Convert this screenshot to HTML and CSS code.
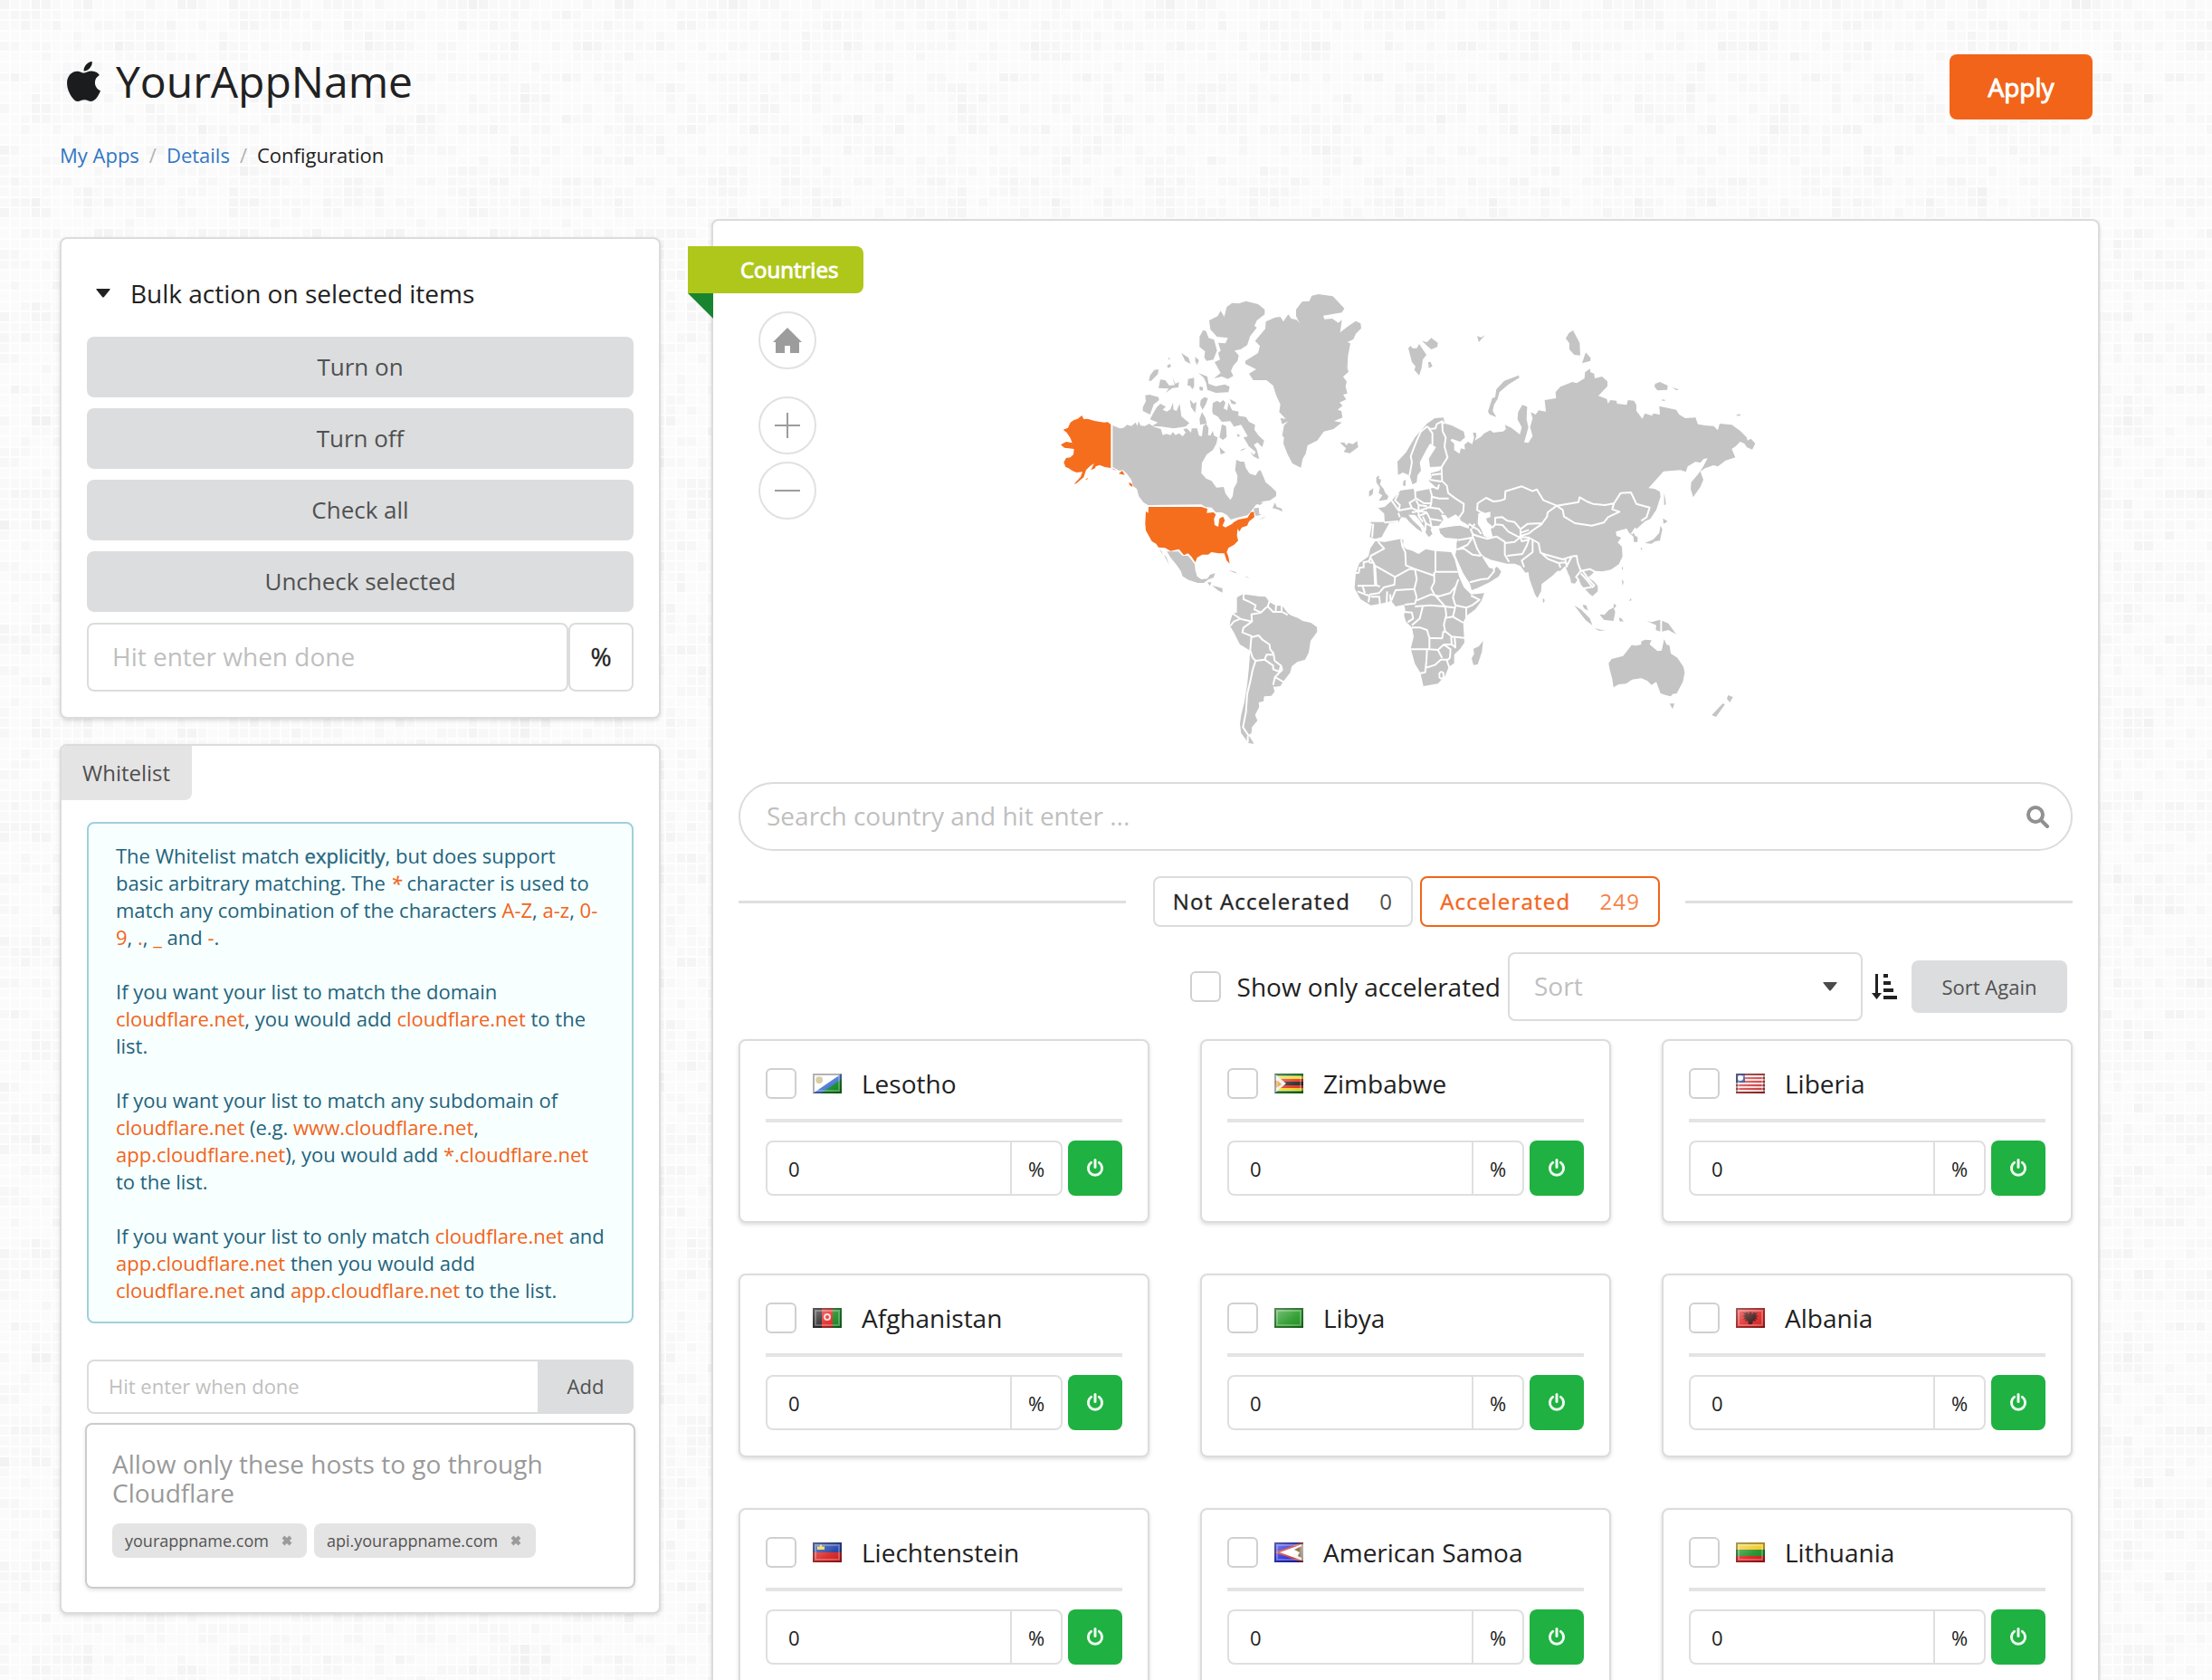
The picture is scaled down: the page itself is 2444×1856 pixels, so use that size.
FILE: index.html
```html
<!DOCTYPE html>
<html lang="en">
<head>
<meta charset="utf-8">
<meta name="viewport" content="width=device-width, initial-scale=1">
<title>YourAppName - Configuration</title>
<link rel="stylesheet" href="styles.css">
</head>
<body>
<svg class="sprite" aria-hidden="true">
  <defs>
    <linearGradient id="gloss" x1="0" y1="0" x2="1" y2="1">
      <stop offset="0" stop-color="#fff" stop-opacity=".45"/>
      <stop offset=".6" stop-color="#fff" stop-opacity=".1"/>
      <stop offset="1" stop-color="#000" stop-opacity=".15"/>
    </linearGradient>
  </defs>
  <symbol id="i-power" viewBox="0 0 20 20">
    <path d="M5.6 4.4a7.6 7.6 0 1 0 8.8 0" fill="none" stroke="currentColor" stroke-width="3" stroke-linecap="round"/>
    <path d="M10 1.5v8" fill="none" stroke="currentColor" stroke-width="3" stroke-linecap="round"/>
  </symbol>
  <symbol id="i-close" viewBox="0 0 12 12">
    <path d="M2 2l8 8M10 2l-8 8" fill="none" stroke="currentColor" stroke-width="4"/>
  </symbol>
  <symbol id="f-frame" viewBox="0 0 32 22">
    <rect width="32" height="22" fill="url(#gloss)"/>
    <rect x="1" y="1" width="30" height="20" fill="none" stroke="#000" stroke-opacity=".3" stroke-width="2"/>
    <rect x="3" y="3" width="26" height="16" fill="none" stroke="#fff" stroke-opacity=".25" stroke-width="2"/>
  </symbol>
</svg>

<div class="page">
  <header class="top">
    <div class="top-main">
      <h1 class="app-title">
        <svg class="apple" viewBox="4 32 376 448" aria-hidden="true"><path d="M318.700 268.700c-.2-36.700 16.400-64.400 50-84.800-18.800-26.900-47.200-41.700-84.700-44.600-35.500-2.800-74.300 20.700-88.500 20.700-15 0-49.400-19.700-76.400-19.700C63.300 141.200 4 184.800 4 273.500q0 39.300 14.400 81.200c12.800 36.700 59 126.700 107.200 125.200 25.200-.6 43-17.900 75.800-17.900 31.800 0 48.300 17.900 76.400 17.900 48.600-.7 90.400-82.500 102.600-119.300-65.200-30.700-61.700-90-61.700-91.900zm-56.600-164.200c27.300-32.400 24.800-61.900 24-72.500-24.100 1.400-52 16.400-67.900 34.900-17.500 19.800-27.800 44.300-25.600 71.900 26.100 2 49.900-11.400 69.500-34.300z"/></svg>
        YourAppName
      </h1>
      <nav class="crumbs" aria-label="Breadcrumb">
        <a href="#apps">My Apps</a><span class="sep">/</span><a href="#details">Details</a><span class="sep">/</span><span>Configuration</span>
      </nav>
    </div>
    <button class="apply strong" type="button">Apply</button>
  </header>

  <div class="columns">
    <aside class="side">
      <section class="panel bulk">
        <h2 class="bulk-title"><svg class="caret" viewBox="0 0 16 10" aria-hidden="true"><path d="M1 0h14q1 0 .5 1L9 9q-1 1-2 0L.5 1Q0 0 1 0z"/></svg>Bulk action on selected items</h2>
        <div class="bulk-actions">
          <button class="btn" type="button">Turn on</button>
          <button class="btn" type="button">Turn off</button>
          <button class="btn" type="button">Check all</button>
          <button class="btn" type="button">Uncheck selected</button>
          <div class="bulk-percent">
            <input id="bulk" class="field" type="text" placeholder="Hit enter when done">
            <label class="unit medium" for="bulk">%</label>
          </div>
        </div>
      </section>

      <section class="panel whitelist">
        <h2 class="tab">Whitelist</h2>
        <div class="info">
          <p>The Whitelist match <span class="medium">explicitly</span>, but does support basic arbitrary matching. The <em class="medium">*</em> character is used to match any combination of the characters <b>A-Z</b>, <b>a-z</b>, <b>0-9</b>, <b>.</b>, <b>_</b> and <b>-</b>.</p>
          <p>If you want your list to match the domain <b>cloudflare.net</b>, you would add <b>cloudflare.net</b> to the list.</p>
          <p>If you want your list to match any subdomain of <b>cloudflare.net</b> (e.g. <b>www.cloudflare.net</b>, <b>app.cloudflare.net</b>), you would add <b>*.cloudflare.net</b> to the list.</p>
          <p>If you want your list to only match <b>cloudflare.net</b> and <b>app.cloudflare.net</b> then you would add <b>cloudflare.net</b> and <b>app.cloudflare.net</b> to the list.</p>
        </div>
        <div class="add-row">
          <input class="field" type="text" placeholder="Hit enter when done" aria-label="Host">
          <button class="btn" type="button">Add</button>
        </div>
        <div class="hosts">
          <p>Allow only these hosts to go through Cloudflare</p>
          <div class="tags">
            <span class="tag">yourappname.com<button type="button" aria-label="Remove yourappname.com"><svg><use href="#i-close"/></svg></button></span>
            <span class="tag">api.yourappname.com<button type="button" aria-label="Remove api.yourappname.com"><svg><use href="#i-close"/></svg></button></span>
          </div>
        </div>
      </section>
    </aside>

    <main class="panel countries">
      <h2 class="ribbon strong">Countries</h2>

      <div class="map-area">
        <div class="map-controls">
          <button class="round home" type="button" aria-label="Reset map"><svg viewBox="0 0 32 28"><path d="M16 0l16 16h-3v12H19v-8h-6v8H3V16H0z" fill="currentColor"/></svg></button>
          <button class="round" type="button" aria-label="Zoom in"><svg viewBox="0 0 28 28"><path d="M14 0v28M0 14h28" stroke="currentColor" stroke-width="2"/></svg></button>
          <button class="round" type="button" aria-label="Zoom out"><svg viewBox="0 0 28 28"><path d="M0 14h28" stroke="currentColor" stroke-width="2"/></svg></button>
        </div>
        <svg class="map" viewBox="0 42 2430 1518" role="img" aria-label="World map">
          <g class="land">
            <!-- Canada -->
            <path d="M238 480L262 490 274 488 286 478 300 482 314 470 320 482 324 466 330 480 344 482 360 474 372 484 398 492 404 512 416 508 430 512 438 502 446 512 458 506 470 516 480 504 472 492 484 490 498 504 500 490 518 490 524 514 534 516 538 482 548 474 556 490 554 512 562 514 570 498 574 514 586 520 582 540 570 562 550 576 534 604 532 638 548 656 566 664 582 686 606 684 612 706 628 727 636 715 640 688 650 670 652 648 644 628 648 594 662 600 674 600 680 622 692 640 712 646 720 632 728 628 738 650 745 668 765 685 780 700 780 714 760 728 735 732 712 744 694 768 684 778 650 786 630 792 616 776 600 768 580 768 566 752 545 750 532 742 355 744 340 735 325 715 318 690 305 680 300 660 285 640 272 628 260 630 238 618Z"/>
            <path d="M705 755L722 752 724 774 732 776 712 780ZM776 736L782 750 798 755 801 766 785 758 768 754ZM722 793L748 780 736 788ZM712 738L738 734 726 744Z"/>
            <path d="M346 380L360 378 390 386 392 396 374 410 362 444 338 432 338 420 348 400ZM370 444L384 420 396 408 414 418 404 428 418 434 430 426 438 404 440 428 450 432 460 408 466 450 480 462 492 472 480 484 440 490 400 484 368 482 388 470 362 460ZM494 394L506 408 516 402 512 438 498 420ZM530 396L542 386 554 390 546 412 536 428 528 412ZM534 436L546 456 550 474 528 478 526 458Z"/>
            <path d="M568 430L570 406 584 398 594 404 604 396 612 404 606 424 618 430 622 404 634 430 656 434 654 448 680 452 690 468 710 478 708 494 722 514 740 530 734 552 718 536 706 544 716 560 724 592 706 580 712 568 690 550 672 520 686 516 664 478 640 484 628 466 600 468 586 450 570 442ZM626 392L648 404 644 410 632 408ZM600 476L614 482 616 518 604 528 592 520ZM592 552L612 570 596 576ZM668 558L682 556 660 566ZM650 508L662 514 652 518ZM694 566L722 592 704 582Z"/>
            <path d="M616 88L634 74 656 76 680 68 720 78 742 96 742 112 716 132 708 150 716 156 694 184 684 214 662 228 642 232 656 248 652 266 638 282 630 300 638 316 620 326 600 318 574 324 596 306 576 270 594 262 588 240 596 232 588 206 612 208 620 190 584 186 562 162 558 132 586 118 596 100 608 120Z"/>
            <path d="M538 164L548 168 556 190 574 196 584 232 572 262 550 266 542 256 544 234 526 220 526 186ZM522 306L552 318 556 342 580 350 610 344 626 352 622 370 580 372 552 362 548 340 540 322ZM466 240L490 256 496 276 478 266ZM512 252L524 264 518 280 512 268ZM358 332L362 314 376 296 390 294 388 310 366 332ZM418 282L428 276 432 284 422 290ZM422 256l8 2-6 4ZM396 328L412 330 426 348 444 346 436 320 446 342 458 336 456 354 436 356 414 372 424 358 390 356ZM488 326L508 322 508 352 502 360 494 348 486 348ZM526 350l12 4-2 12-10-4ZM524 288l12 0Z"/>
            <!-- Greenland, Iceland -->
            <path d="M898 50L920 45 968 52 1006 92 998 106 936 116 940 128 966 126 986 140 998 130 992 172 1020 150 1044 134 1060 142 1062 158 1044 176 1036 194 1016 204 1026 208 1018 250 1016 290 1020 302 1002 318 1014 335 1010 350 1016 374 1002 378 1012 394 990 404 1000 414 984 428 996 432 1000 454 972 466 998 470 970 492 938 500 916 530 884 546 878 574 868 590 862 620 834 606 818 576 804 540 806 520 800 514 806 480 820 466 800 476 794 456 812 458 790 436 794 410 780 380 770 348 748 330 704 330 690 308 714 294 678 276 678 266 720 240 726 216 710 200 744 160 746 136 776 122 794 120 804 136 820 112 830 126 848 130 858 142 846 118 846 96 866 70 890 68Z"/>
            <path d="M992 538L1006 536 1012 546 1020 538 1034 542 1048 532 1052 552 1024 572 1004 568 1012 556Z"/>
            <!-- Mexico and the Caribbean -->
            <path d="M418 898L455 898 470 912 488 912 500 926 510 940 512 960 518 980 532 990 552 988 562 974 578 970 572 985 556 990 540 1002 520 1002 490 992 470 980 464 962 448 940 430 918ZM394 892L404 910 400 896ZM408 908L416 924 426 944 416 916ZM552 1000l14 0-6 12ZM568 1010L590 1016 602 1020 602 1034 586 1026ZM600 1042l6 4ZM622 960l30 12-10-8ZM676 982l16 4-8-4Z"/>
            <!-- South America -->
            <path d="M650 1050L668 1040 690 1042 720 1046 745 1048 758 1066 780 1078 800 1078 818 1102 830 1110 852 1118 868 1128 895 1134 915 1148 916 1164 894 1194 888 1232 876 1256 850 1264 832 1278 826 1300 804 1328 794 1344 776 1346 770 1344 775 1362 764 1376 740 1378 738 1394 722 1398 724 1412 710 1440 718 1458 700 1480 698 1500 688 1506 700 1524 706 1536 688 1532 664 1500 660 1470 664 1440 674 1400 684 1340 690 1280 694 1226 660 1206 640 1166 626 1142 628 1128 636 1104 650 1100Z"/>
          </g>
          <path class="border" d="M672 1040L672 1056 690 1064 712 1076 708 1090 730 1100 744 1086 752 1080 770 1098 800 1098 818 1108M730 1100L698 1106 700 1130 664 1122 636 1104M758 1062L752 1080M780 1076L778 1098M798 1076V1098M628 1144L640 1130 662 1120M700 1130L672 1150 668 1166 698 1178 694 1226M698 1182L722 1176 734 1190 758 1206 760 1222 772 1236M694 1226L702 1250 712 1260 742 1256 748 1240 772 1240 775 1260 796 1276 790 1296 770 1288 770 1276 742 1256M712 1260L702 1290 694 1330 684 1370 680 1430 670 1480 690 1510M796 1276L800 1290 776 1314 770 1340M776 1314L804 1330M686 1510V1530"/>
          <g class="active">
            <path d="M136 447L142 459 155 458 178 465 210 470 222 469 232 477 232 621 212 618 195 611 182 616 180 622 166 628 176 606 162 616 150 628 142 652 132 660 118 672 110 674 132 650 138 634 118 636 104 630 92 622 82 618 76 602 84 588 98 586 108 576 110 558 92 556 78 554 66 544 84 534 104 538 98 522 86 504 74 494 90 488 98 470 110 462 122 458ZM148 658l10-4-6 6ZM258 640L270 630 278 644ZM292 668L302 674 304 684 294 678ZM236 622L252 630 240 626ZM100 678l6-2ZM288 696l2 6Z"/>
            <path d="M357 750H532L552 756 550 770 572 768 580 775 574 790 576 810 588 816 592 788 604 782 610 795 602 812 612 818 634 806 640 800 655 792 685 786 696 768 706 766 708 784 690 798 684 812 666 818 658 832 652 822 650 845 654 862 640 876 622 886 616 900 622 916 626 938 616 928 608 904 590 904 565 900 555 908 535 908 518 918 512 934 500 916 488 904 474 910 458 890 430 896 412 886 390 884 382 872 368 864 358 846 348 828 346 805 348 765 356 770Z"/>
          </g>
          <g transform="translate(990 0)">
            <g class="land">
              <!-- Arctic islands -->
              <path d="M228 224L236 216 242 224 256 224 264 210 288 246 276 262 272 290 264 314 248 296 252 284 240 270ZM274 200L290 204 304 190 326 206 324 220 304 228 290 216ZM294 270l8 0 6 14-12 6ZM456 184l14 4 14-8-12 12-10 12ZM750 192L760 174 774 165 796 206 798 248 778 246 762 228 762 208ZM816 238L832 256 832 266 804 274ZM594 314L596 322 560 344 530 370 524 392 512 412 508 432 520 452 498 444 492 434 506 390 516 386 520 360 546 332ZM1046 342L1062 336 1088 348 1086 362 1054 364 1044 352ZM1102 354l22 6-6 4ZM1064 396l12-2 4 6ZM1312 448l14-6 4 6Z"/>
              <!-- Eurasia -->
              <path d="M350 474L372 480 412 500 416 520 400 534 372 524 368 530 380 540 380 562 398 574 402 556 416 560 414 544 426 534 440 542 446 520 442 504 452 504 454 516 448 530 468 518 480 506 500 496 510 504 526 502 542 500 552 492 548 478 570 488 598 510 604 486 590 460 592 436 606 412 622 418 620 460 626 486 612 536 626 538 640 516 632 486 640 456 634 436 650 444 660 430 684 434 680 396 718 390 716 370 732 352 772 336 786 340 812 324 814 304 830 292 832 304 844 308 846 324 870 318 888 334 888 350 858 382 886 392 890 408 898 396 918 398 920 408 952 412 956 396 976 398 984 412 984 432 1004 458 1012 440 1036 448 1040 440 1062 444 1060 416 1116 428 1126 444 1146 456 1180 454 1188 476 1212 480 1240 482 1254 496 1260 474 1300 478 1328 498 1350 520 1352 530 1364 524 1378 540 1368 560 1350 552 1342 540 1328 534 1314 548 1300 558 1312 586 1280 596 1254 616 1240 612 1212 622 1196 632 1206 660 1196 684 1172 718 1164 690 1166 668 1190 640 1206 616 1220 588 1206 592 1196 604 1180 600 1154 616 1148 634 1130 628 1074 632 1024 688 1044 690 1062 700 1064 716 1050 760 1030 790 1012 798 986 822 972 830 980 846 988 850 988 866 976 866 974 848 960 836 952 822 936 826 916 832 918 846 934 852 922 868 936 882 938 914 926 940 900 958 872 964 846 962 838 972 824 984 842 996 856 1012 856 1030 838 1046 826 1036 812 1020 802 1010 792 988 780 1004 768 1002 764 984 756 966 748 946 732 962 722 962 706 978 670 1006 668 1030 656 1052 648 1040 630 990 626 966 616 968 600 946 580 938 555 938 530 932 500 925 480 915 466 902 482 930 496 952 512 956 522 948 536 964 528 980 500 998 460 1018 438 1026 432 1004 410 970 392 930 384 910 388 890 388 870 392 856 350 852 334 838 330 822 350 818 380 814 400 812 428 822 430 812 402 796 398 785 385 775 360 788 350 776 336 776 344 792 330 812 308 814 302 826 308 840 296 850 286 836 280 815 262 790 250 776 228 776 244 796 268 818 274 834 256 822 232 800 220 786 205 784 196 800 165 804 150 830 140 850 118 856 100 850 108 806 100 800 150 800 148 772 128 754 150 750 172 730 188 712 202 696 216 694 245 690 250 700 300 690 318 684 296 664 306 652 302 638 332 630 340 616 300 618 296 590 320 552 300 540 288 560 266 602 270 630 258 646 256 668 242 676 232 646 210 636 194 644 192 600 220 570 250 520 290 474 316 456 344 454Z"/>
              <!-- British Isles, Denmark -->
              <path d="M122 652L132 646 130 656 138 660 134 676 146 690 152 704 162 714 158 726 130 730 142 712 130 704 134 686 122 668ZM98 698L112 688 110 708 98 716ZM212 664l8-4-2 22-8-4ZM214 822l2 12ZM248 848l8 2Z"/>
              <!-- Africa -->
              <path d="M118 864L150 866 205 856 212 860 210 880 222 890 240 895 262 906 286 890 316 896 370 900 382 925 396 980 412 1016 436 1040 480 1036 470 1062 450 1090 422 1110 410 1132 414 1200 400 1220 380 1240 380 1268 362 1280 350 1310 326 1336 278 1344 268 1300 250 1270 236 1220 246 1180 240 1150 220 1130 214 1110 218 1090 214 1074 186 1080 172 1062 130 1072 104 1076 70 1056 50 1020 54 970 66 936 96 914 102 888Z"/>
              <path d="M476 1194L472 1230 458 1272 444 1274 438 1252 446 1238 444 1220 462 1212ZM674 1052l6 6-2 10-4-4Z"/>
              <!-- South-east Asia and Japan -->
              <path d="M778 1076L800 1090 830 1120 838 1142 816 1126ZM844 1152L860 1156 882 1160 860 1160ZM806 1074l12 2 6 18-14-8ZM862 1106L878 1108 892 1092 908 1084 914 1098 908 1128 876 1124ZM884 1100L908 1084 910 1070 918 1078 908 1088ZM926 1118l8 0 8 14-8-4-4 4ZM936 946l4 8-4 6ZM936 990l6 8-4 14ZM960 1062l6-10 2 8ZM1008 1116l12 2ZM1018 1128L1034 1132 1062 1124 1090 1136 1104 1156 1116 1172 1090 1158 1066 1164 1048 1158 1050 1142ZM794 1054l6 4ZM1076 704L1080 724 1082 742 1076 744ZM1074 760l4 4ZM1072 788L1088 798 1074 806ZM1064 812L1070 824 1062 862 1046 864 1034 872 1012 870 1040 858 1060 836ZM998 884l6 4-4 6ZM1010 872l8 2ZM860 984l6 0Z"/>
              <!-- Oceania -->
              <path d="M892 1268L902 1254 940 1244 968 1208 984 1210 1000 1206 1000 1196 1012 1190 1034 1192 1028 1206 1054 1228 1068 1226 1076 1188 1084 1206 1094 1210 1098 1236 1120 1250 1140 1280 1144 1300 1138 1330 1118 1368 1104 1370 1098 1378 1082 1374 1064 1368 1050 1330 1034 1340 1020 1326 1000 1318 970 1322 950 1336 926 1338 908 1348 904 1320 896 1290ZM1094 1402L1110 1402 1104 1420ZM1288 1374L1304 1380 1294 1398 1284 1386ZM1234 1440L1270 1402 1278 1404 1248 1446ZM602 1474l4 0Z"/>
            </g>
            <path class="sea" d="M460 772L474 766 482 770 500 766 500 784 486 788 490 800 506 814 502 826 508 850 490 852 478 846 470 826 458 806Z"/>
            <g class="border">
              <!-- Europe -->
              <path d="M232 646L240 602 236 582 256 530 270 500 290 484 302 492 318 490 322 476 340 466 348 474M296 490L308 506 308 545M340 466L342 500 352 520 348 550 358 586 338 618 340 664 356 680 360 704 384 722 412 740 410 766 396 786M305 644L338 640M300 660L338 666M300 680L326 690 330 676M250 690L252 720 280 738 304 738 306 712 300 690M306 716L330 722 362 722M304 738L300 752 330 756 344 772M196 704L184 728 200 744 196 762 172 728M196 762L240 754 232 736 252 724M195 770L200 784M148 802L195 798M112 806L108 850M240 754L262 764 300 750M262 740L262 764 290 768M240 768L262 764 262 780 290 770 300 790 338 796M276 782L286 804 304 814M300 792L306 820M286 804L284 830M262 780L276 800M254 728L262 744 290 748M428 806L460 826 470 840M434 822L444 846M448 806L440 822"/>
              <!-- Asia -->
              <path d="M470 768L456 760 458 738 486 720 510 732 530 730 548 724 550 698 604 682 640 698 654 692 676 728 720 746 792 734 796 718 820 732 840 740 880 744 910 738 932 704 966 702 984 740 1028 752 1018 784 1000 796M720 746L740 760 744 782 780 804 836 812 876 802 890 784 928 766 904 758 910 738M720 746L690 768 688 782 672 804 624 806 600 824 580 800 556 796 540 784 516 786 516 812M506 820L516 808 540 810 560 832 590 848M600 824L600 846 628 838 640 828 672 806M600 836L628 826M590 848L628 852 660 870 666 902 690 910 740 924 770 914 786 912 790 936 800 962 830 956 852 968M440 840L456 846 490 856 520 848 548 866 548 908 562 932M548 870L580 866 600 850 604 864 628 858 620 880 606 906 556 912M640 860L640 900 604 928 612 950M672 906L690 922 726 936 748 934M728 936L732 952M748 924L754 950M770 914L754 944M800 962L784 982 794 994M800 970L818 990 838 1016 846 1010M810 1020L834 1016M806 962L826 990 846 1012M982 820L968 840M440 844L456 888 470 912M392 860L440 852M438 856L424 876 388 892M390 890L412 888 440 908 468 912M432 1000L470 990 492 988 512 964 512 950"/>
              <!-- Africa -->
              <path d="M128 866L148 888 104 912 98 930 78 934M104 920L118 945 122 1010 60 1012M98 934L114 936 118 1010M80 932V950L66 952 64 968 50 970M118 945L184 982 232 956 250 956M204 856L208 880 218 900 220 944 250 956 314 978M318 894V965H392M314 966V1000L304 1020 314 1040M250 956L256 990 248 1022 186 1026 172 1060M184 982L182 1008 148 1016 130 1036 100 1040M122 1010L134 1014M100 1040L96 1066M76 1010L84 1036M60 1030L96 1044M104 1048L132 1048 134 1074M158 1030L156 1072M168 1040L170 1070M248 1022L256 1050 250 1070 216 1074M256 1060L304 1040 330 1046 366 1036 386 1012 394 990M314 1040L350 1080M386 1012L376 1050 384 1076 420 1084 440 1076 464 1058 436 1044M250 1080L300 1076 350 1080 380 1084M276 1080L266 1120 240 1142M216 1098L240 1100 244 1120 226 1132M420 1086V1118M384 1080L376 1114 350 1118M350 1080L354 1108 346 1140 350 1162 372 1180 414 1184M376 1114L410 1134M240 1150L268 1150 290 1158 298 1184 340 1186 344 1164 352 1162M298 1184L298 1222 234 1222M298 1222L326 1224 346 1206 370 1206M370 1180L372 1206 384 1216 382 1184M290 1222L288 1262 284 1298 266 1302M284 1284L316 1274 336 1256 360 1256M326 1224L340 1250M346 1206L368 1222 366 1250 356 1260 364 1282M332 1308a7 7 0 1 1 12 0 7 7 0 1 1-12 0"/>
              <path d="M1066 1124V1166"/>
            </g>
          </g>
        </svg>
      </div>

      <div class="search">
        <input type="search" placeholder="Search country and hit enter ..." aria-label="Search country">
        <svg viewBox="0 0 26 26" aria-hidden="true"><circle cx="11" cy="11" r="8" fill="none" stroke="currentColor" stroke-width="4"/><path d="M17 17l7 7" stroke="currentColor" stroke-width="4" stroke-linecap="round"/></svg>
      </div>

      <div class="totals">
        <button class="total" type="button"><span class="medium">Not Accelerated</span><span class="count">0</span></button>
        <button class="total on" type="button"><span class="medium">Accelerated</span><span class="count">249</span></button>
      </div>

      <div class="sorting">
        <label class="check"><input type="checkbox">Show only accelerated</label>
        <div class="select">
          <select aria-label="Sort"><option>Sort</option><option>Name</option></select>
          <svg viewBox="0 0 16 10" aria-hidden="true"><path d="M1 0h14q1 0 .5 1L9 9q-1 1-2 0L.5 1Q0 0 1 0z" fill="currentColor"/></svg>
        </div>
        <svg class="sort-icon" viewBox="0 0 28 28" aria-hidden="true"><path d="M4 0h3v21h4l-5.500 7L0 21h4zM13 0h5v4h-5zM13 8h8v4h-8zM13 16h11v4H13zM13 24h15v4H13z"/></svg>
        <button class="btn again" type="button">Sort Again</button>
      </div>

      <div class="cards">
        <article class="card">
          <label class="check"><input type="checkbox"><svg class="flag" viewBox="0 0 32 22"><path fill="#fff" d="M0 0h32v22H0z"/><path fill="#3b6fd0" d="M32 0v22H0z"/><path fill="#0a8a1a" d="M32 6v16H9z"/><circle cx="7" cy="7" r="4" fill="#c9ba86"/><use href="#f-frame"/></svg>Lesotho</label>
          <div class="control"><input id="c1" type="text" value="0" aria-label="Lesotho share"><label for="c1">%</label><button type="button" aria-label="Toggle Lesotho"><svg><use href="#i-power"/></svg></button></div>
        </article>
        <article class="card">
          <label class="check"><input type="checkbox"><svg class="flag" viewBox="0 0 32 22"><path fill="#188a18" d="M0 0h32v22H0z"/><path fill="#f5d51c" d="M0 3h32v16H0z"/><path fill="#e0301e" d="M0 6h32v10H0z"/><path fill="#222" d="M0 9h32v4H0z"/><path fill="#eee" d="M0 0l13 11L0 22z"/><path fill="#e8962a" d="M1 8l3 0 4 4-6 4z"/><use href="#f-frame"/></svg>Zimbabwe</label>
          <div class="control"><input id="c2" type="text" value="0" aria-label="Zimbabwe share"><label for="c2">%</label><button type="button" aria-label="Toggle Zimbabwe"><svg><use href="#i-power"/></svg></button></div>
        </article>
        <article class="card">
          <label class="check"><input type="checkbox"><svg class="flag" viewBox="0 0 32 22"><path fill="#f6dede" d="M0 0h32v22H0z"/><path stroke="#d23a3a" stroke-width="2" d="M0 1h32M0 5h32M0 9h32M0 13h32M0 17h32M0 21h32"/><path fill="#1c2f86" d="M0 0h10v10H0z"/><circle cx="5" cy="5" r="3" fill="#fff"/><use href="#f-frame"/></svg>Liberia</label>
          <div class="control"><input id="c3" type="text" value="0" aria-label="Liberia share"><label for="c3">%</label><button type="button" aria-label="Toggle Liberia"><svg><use href="#i-power"/></svg></button></div>
        </article>
        <article class="card">
          <label class="check"><input type="checkbox"><svg class="flag" viewBox="0 0 32 22"><path fill="#1c1c1c" d="M0 0h11v22H0z"/><path fill="#e32222" d="M10 0h12v22H10z"/><path fill="#158a20" d="M22 0h10v22H22z"/><circle cx="16" cy="10" r="3" fill="none" stroke="#fbd5d0" stroke-width="2"/><use href="#f-frame"/></svg>Afghanistan</label>
          <div class="control"><input id="c4" type="text" value="0" aria-label="Afghanistan share"><label for="c4">%</label><button type="button" aria-label="Toggle Afghanistan"><svg><use href="#i-power"/></svg></button></div>
        </article>
        <article class="card">
          <label class="check"><input type="checkbox"><svg class="flag" viewBox="0 0 32 22"><path fill="#1f961f" d="M0 0h32v22H0z"/><use href="#f-frame"/></svg>Libya</label>
          <div class="control"><input id="c5" type="text" value="0" aria-label="Libya share"><label for="c5">%</label><button type="button" aria-label="Toggle Libya"><svg><use href="#i-power"/></svg></button></div>
        </article>
        <article class="card">
          <label class="check"><input type="checkbox"><svg class="flag" viewBox="0 0 32 22"><path fill="#e01f1f" d="M0 0h32v22H0z"/><path fill="#3a1010" d="M15 5l1-2 1 2 1 2 2-3 1 2 3-1-2 3 3 1-3 1 2 3-3-1 1 3-3-1-1 4h-4l-1-4-3 1 1-3-3 1 2-3-3-1 3-1-2-3 3 1 1-2 2 3z"/><use href="#f-frame"/></svg>Albania</label>
          <div class="control"><input id="c6" type="text" value="0" aria-label="Albania share"><label for="c6">%</label><button type="button" aria-label="Toggle Albania"><svg><use href="#i-power"/></svg></button></div>
        </article>
        <article class="card">
          <label class="check"><input type="checkbox"><svg class="flag" viewBox="0 0 32 22"><path fill="#1236a0" d="M0 0h32v11H0z"/><path fill="#d81a1a" d="M0 11h32v11H0z"/><path fill="#f2d13a" d="M5 8V4l2 1 2-3 2 3 2-1v4z"/><use href="#f-frame"/></svg>Liechtenstein</label>
          <div class="control"><input id="c7" type="text" value="0" aria-label="Liechtenstein share"><label for="c7">%</label><button type="button" aria-label="Toggle Liechtenstein"><svg><use href="#i-power"/></svg></button></div>
        </article>
        <article class="card">
          <label class="check"><input type="checkbox"><svg class="flag" viewBox="0 0 32 22"><path fill="#1a22e0" d="M0 0h32v22H0z"/><path fill="#fff" stroke="#c8382c" stroke-width="2" d="M33 0L3 11l30 11z"/><path fill="#8a6a3c" d="M22 8l8-4v13l-4-2 2-4z"/><use href="#f-frame"/></svg>American Samoa</label>
          <div class="control"><input id="c8" type="text" value="0" aria-label="American Samoa share"><label for="c8">%</label><button type="button" aria-label="Toggle American Samoa"><svg><use href="#i-power"/></svg></button></div>
        </article>
        <article class="card">
          <label class="check"><input type="checkbox"><svg class="flag" viewBox="0 0 32 22"><path fill="#f0c414" d="M0 0h32v8H0z"/><path fill="#148a1c" d="M0 8h32v7H0z"/><path fill="#dc1414" d="M0 15h32v7H0z"/><use href="#f-frame"/></svg>Lithuania</label>
          <div class="control"><input id="c9" type="text" value="0" aria-label="Lithuania share"><label for="c9">%</label><button type="button" aria-label="Toggle Lithuania"><svg><use href="#i-power"/></svg></button></div>
        </article>
      </div>
    </main>
  </div>
</div>
</body>
</html>
```
FILE: styles.css
```css
* { box-sizing: border-box; }

body {
  height: 100vh;
  margin: 0;
  overflow: hidden;
  color: #212121;
  font: 28px/36px "Open Sans", "Noto Sans", sans-serif;
  background-color: #fbfbfb;
  /* white grid lines over three layers of loosely scattered cells */
  background-image:
    url("data:image/svg+xml,%3Csvg xmlns='http://www.w3.org/2000/svg' width='23' height='23'%3E%3Cpath d='M0 11h23M0 22h23M11 0v23M22 0v23' stroke='%23fff' stroke-width='2' stroke-opacity='.8'/%3E%3C/svg%3E"),
    url("data:image/svg+xml,%3Csvg xmlns='http://www.w3.org/2000/svg' width='161' height='115'%3E%3Cpath d='M0 0h12v12H0zM35 0h23v12H35zM92 0h12v12H92zM138 12h12v11h-12zM23 23h12v12H23zM58 23h11v12H58zM104 23h23v12h-23zM0 46h23v12H0zM81 35h11v23H81zM127 46h11v12h-11zM46 58h12v11H46zM104 69h11v12h-11zM12 81h11v11H12zM58 81h23v11H58zM138 81h23v11h-23zM35 104h11v11H35zM92 92h12v23H92zM115 104h12v11h-12z' fill-opacity='.014'/%3E%3C/svg%3E"),
    url("data:image/svg+xml,%3Csvg xmlns='http://www.w3.org/2000/svg' width='299' height='207'%3E%3Cpath d='M12 12h34v11H12zM81 0h23v23H81zM150 12h11v23h-11zM196 0h34v12h-34zM265 12h12v11h-12zM35 46h23v12H35zM104 46h46v12h-46zM184 58h23v11h-23zM242 46h34v23h-34zM0 81h35v11H0zM69 69h23v35H69zM127 92h34v12h-34zM207 81h35v11h-35zM276 104h23v11h-23zM23 127h35v11H23zM92 127h12v23H92zM161 115h23v35h-23zM219 138h46v12h-46zM0 161h12v23H0zM58 173h46v11H58zM138 173h23v11h-23zM196 184h34v12h-34zM265 161h23v35h-23z' fill-opacity='.012'/%3E%3C/svg%3E"),
    url("data:image/svg+xml,%3Csvg xmlns='http://www.w3.org/2000/svg' width='253' height='345'%3E%3Cpath d='M0 0h69v35H0zM127 23h69v46h-69zM35 92h69v46H35zM173 127h58v46h-58zM0 184h58v58H0zM104 196h69v34h-69zM207 253h46v46h-46zM58 276h81v46H58z' fill-opacity='.008'/%3E%3C/svg%3E");
}

h1, h2, p { margin: 0; font-weight: 400; }
svg { display: block; flex: none; }
a { color: #3176c3; text-decoration: none; }

button, input, select {
  margin: 0;
  padding: 0;
  border: 0;
  background: none;
  color: inherit;
  font: inherit;
  outline: 0;
}

button { cursor: pointer; }
input::placeholder { color: #bfbfbf; opacity: 1; }

.sprite { position: absolute; width: 0; height: 0; }

/* both thicken the regular face without widening it */
.strong { -webkit-text-stroke: 1px currentColor; }
.medium { -webkit-text-stroke: 1px color-mix(in srgb, currentColor 35%, transparent); }

.page { padding: 58px 124px 0 66px; }

/* header */
.top {
  display: flex;
  justify-content: space-between;
  align-items: flex-start;
  padding-right: 8px;
}

.app-title {
  display: flex;
  align-items: center;
  gap: 17px;
  padding-left: 8px;
  font-size: 48px;
  line-height: 64px;
}

.apple { width: 37px; height: 44px; fill: #1b1c1d; }

.crumbs {
  display: flex;
  gap: 11px;
  margin-top: 33px;
  font-size: 22px;
  line-height: 32px;
}

.crumbs .sep { color: #b3b3b3; }

.apply {
  width: 158px;
  height: 72px;
  margin-top: 2px;
  border-radius: 8px;
  background: #f26419;
  color: #fff;
}

/* layout */
.columns {
  display: grid;
  grid-template-columns: 664px minmax(0, 1fr);
  gap: 56px;
  align-items: start;
  margin-top: 55px;
}

.side {
  display: grid;
  gap: 28px;
  padding-top: 20px;
}

.panel {
  padding: 28px;
  border: 2px solid #dcdcdd;
  border-radius: 8px;
  background: #fff;
  box-shadow: 0 2px 4px rgba(34, 36, 38, .15);
}

.btn {
  padding-bottom: 2px;
  border-radius: 8px;
  background: #dcddde;
  color: #505152;
}

.field {
  min-width: 0;
  flex: 1;
  border: 2px solid #dbdcdc;
  border-radius: 8px;
  background: #fff;
}

/* bulk actions */
.bulk-title {
  display: flex;
  align-items: center;
  gap: 22px;
  padding: 14px 10px 30px;
  font-size: 28px;
}

.caret { width: 16px; height: 10px; fill: #212121; }

.bulk-actions { display: grid; gap: 12px; }
.bulk-actions .btn { height: 67px; font-size: 26px; }
.bulk-percent { display: flex; height: 76px; }
.bulk-percent .field { padding: 0 26px 2px; }

.unit {
  display: grid;
  place-items: center;
  width: 72px;
  padding-bottom: 2px;
  border: 2px solid #dbdcdc;
  border-radius: 8px;
}

/* whitelist */
.whitelist { padding: 0 28px 26px; }

.tab {
  width: fit-content;
  margin: 0 0 24px -28px;
  padding: 0 24px 0 23px;
  border-radius: 6px 0 8px 0;
  background: #e4e4e4;
  color: #4f4f4f;
  font-size: 24px;
  line-height: 60px;
}

.info {
  display: grid;
  gap: 30px;
  padding: 20px 30px;
  border: 2px solid #9fd0da;
  border-radius: 8px;
  background: #f8ffff;
  color: #22647c;
  font-size: 22px;
  line-height: 30px;
}

.info b, .info em { color: #f26419; font-weight: 400; }

.add-row { display: flex; height: 60px; margin-top: 40px; font-size: 22px; }
.add-row .field { padding: 0 22px 2px; border-right: 0; border-radius: 8px 0 0 8px; }
.add-row .btn { width: 106px; border-radius: 0 8px 8px 0; }

.hosts {
  margin: 10px -2px 0;
  padding: 27px 28px 32px;
  border: 2px solid #cbcccd;
  border-radius: 8px;
  box-shadow: 0 2px 4px rgba(34, 36, 38, .12);
  color: #9a9a9a;
  line-height: 32px;
}

.tags { display: flex; flex-wrap: wrap; gap: 8px; margin-top: 18px; }

.tag {
  display: flex;
  align-items: center;
  gap: 14px;
  padding: 0 16px 0 14px;
  border-radius: 8px;
  background: #e4e4e4;
  color: #545454;
  font-size: 18px;
  line-height: 38px;
}

.tag button { color: #9b9b9b; }
.tag svg { width: 12px; height: 12px; }

/* countries */
.ribbon {
  position: relative;
  width: fit-content;
  margin-left: -56px;
  padding: 0 28px 0 58px;
  border-radius: 0 8px 8px 0;
  background: #aec71a;
  color: #fff;
  font-size: 24px;
  line-height: 52px;
}

.ribbon::after {
  content: "";
  position: absolute;
  top: 100%;
  left: 0;
  width: 28px;
  height: 28px;
  background: #198430;
  clip-path: polygon(0 0, 100% 0, 100% 100%);
}

.map-area {
  display: grid;
  grid-template-columns: 86px minmax(0, 1fr) 82px;
  justify-items: center;
  margin-bottom: 34px;
}

.map-controls {
  display: grid;
  align-content: start;
  gap: 8px;
  padding: 20px 0 0 22px;
}

.round {
  display: grid;
  place-items: center;
  width: 64px;
  height: 64px;
  border: 2px solid #e1e1e1;
  border-radius: 50%;
  color: #9c9c9c;
}

.round svg { width: 28px; height: 28px; }
.home { margin-bottom: 22px; }
.home svg { width: 32px; }

.map { width: 100%; max-width: 810px; }
.land { fill: #c4c4c4; }
.active { fill: #f56e1e; }
.sea { fill: #fff; }
.border { fill: none; stroke: #fff; stroke-width: 6px; stroke-linejoin: round; }

.search {
  display: flex;
  align-items: center;
  height: 76px;
  padding: 0 24px 0 29px;
  border: 2px solid #dbdcdc;
  border-radius: 38px;
  color: #909090;
}

.search input { flex: 1; padding-bottom: 2px; appearance: none; }
.search svg { width: 26px; height: 26px; }

.totals {
  display: flex;
  align-items: center;
  gap: 8px;
  margin: 28px 0;
}

.totals::before, .totals::after {
  content: "";
  flex: 1;
  height: 3px;
  background: #dfdfe0;
}

.totals::before { margin-right: 22px; }
.totals::after { margin-left: 20px; }

.total {
  display: flex;
  align-items: center;
  gap: 32px;
  height: 56px;
  padding: 0 20px;
  border: 2px solid #dbdcdc;
  border-radius: 8px;
  font-size: 24px;
  letter-spacing: .05em;
}

.total .count { opacity: .8; }
.total.on { border-color: #f26419; color: #f26419; }

.sorting {
  display: flex;
  justify-content: flex-end;
  align-items: center;
  padding-right: 6px;
}

.check { display: flex; align-items: center; line-height: 38px; }

.check input {
  appearance: none;
  width: 34px;
  height: 34px;
  margin-right: 18px;
  border: 2px solid #d0d0d1;
  border-radius: 6px;
  background: #fff;
}

.select {
  display: grid;
  align-items: center;
  width: 392px;
  margin: 0 10px 0 8px;
}

.select select {
  grid-area: 1 / 1;
  appearance: none;
  width: 100%;
  height: 76px;
  padding: 0 27px 2px;
  border: 2px solid #dbdcdc;
  border-radius: 8px;
  color: #bfbfbf;
}

.select svg {
  grid-area: 1 / 1;
  justify-self: end;
  width: 16px;
  height: 10px;
  margin-right: 28px;
  color: #4a4a4a;
  pointer-events: none;
}

.sort-icon { width: 28px; height: 28px; fill: #212121; }
.again { width: 172px; height: 58px; margin-left: 16px; padding: 0; font-size: 22px; }

/* country cards */
.cards {
  display: grid;
  grid-template-columns: repeat(3, minmax(0, 1fr));
  gap: 56px;
  margin-top: 20px;
}

.card {
  padding: 28px;
  border: 2px solid #dcdcdd;
  border-radius: 8px;
  background: #fff;
  box-shadow: 0 2px 4px rgba(34, 36, 38, .15);
}

.card .check { padding-bottom: 20px; border-bottom: 4px solid #e4e4e4; }
.flag { width: 32px; height: 22px; margin-right: 22px; }

.control {
  display: flex;
  height: 61px;
  margin-top: 20px;
  font-size: 22px;
}

.control input {
  flex: 1;
  min-width: 0;
  padding: 0 23px;
  border: 2px solid #dfdfe0;
  border-right: 0;
  border-radius: 8px 0 0 8px;
}

.control label {
  display: grid;
  place-items: center;
  width: 58px;
  border: 2px solid #dfdfe0;
  border-radius: 0 8px 8px 0;
}

.control button {
  display: grid;
  place-items: center;
  width: 60px;
  margin-left: 6px;
  padding-bottom: 2px;
  border-radius: 8px;
  background: #1fb141;
  color: #eefaf0;
}

.control svg { width: 20px; height: 20px; }
```
